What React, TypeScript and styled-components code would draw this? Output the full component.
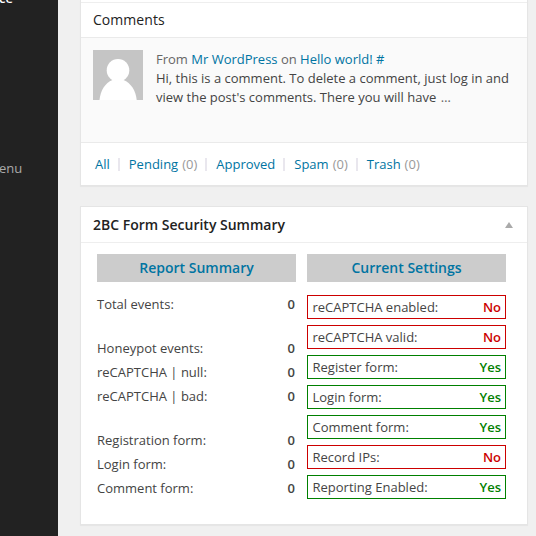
import React from "react";
import styled, { createGlobalStyle } from "styled-components";

const GlobalStyle = createGlobalStyle`
  * { box-sizing: border-box; }
  body {
    margin: 0;
    background: #f0f0f0;
    color: #444;
    font: 13px/19px "Open Sans", sans-serif;
  }
`;

const Page = styled.div`
  display: flex;
  width: 536px;
  height: 536px;
  overflow: hidden;
`;

const Sidebar = styled.nav`
  flex: none;
  width: 58px;
  background: #222;
  overflow: hidden;
`;

const SidebarItem = styled.div<{ $active?: boolean; $gap: number }>`
  height: 20px;
  line-height: 20px;
  margin: ${(p) => p.$gap}px 0 0 -1px;
  color: ${(p) => (p.$active ? "#fff" : "#aaa")};
  font-weight: ${(p) => (p.$active ? 600 : 400)};
  white-space: nowrap;
`;

const Main = styled.main`
  flex: none;
  width: 448px;
  margin-left: 22px;
  display: flex;
  flex-direction: column;
  gap: 20px;
`;

const Panel = styled.section<{ $height: number; $cut?: boolean }>`
  height: ${(p) => p.$height}px;
  background: #fff;
  border: 1px solid #e5e5e5;
  border-top-width: ${(p) => (p.$cut ? 0 : 1)}px;
  box-shadow: 0 1px 1px rgba(0, 0, 0, 0.04);
`;

const SectionTitle = styled.h4`
  height: 36px;
  margin: 2px 0 0;
  padding: 0 12px;
  border-top: 1px solid #eee;
  border-bottom: 1px solid #eaeaea;
  font-size: 14px;
  font-weight: 400;
  line-height: 34px;
  letter-spacing: 0.05px;
  color: #222;
`;

const Comment = styled.article`
  display: flex;
  gap: 13px;
  height: 105px;
  padding: 12px;
  background: #fafafa;
  border-bottom: 1px solid #eaeaea;
`;

const Avatar = styled.svg`
  flex: none;
  width: 50px;
  height: 50px;
`;

const CommentText = styled.div`
  white-space: nowrap;
  color: #444;
`;

const Meta = styled.div`
  color: #666;
`;

const Link = styled.a`
  color: #0074a2;
`;

const Ellipsis = styled.span`
  margin-left: 1px;
  color: #666;
`;

const Filters = styled.div`
  display: flex;
  height: 42px;
  padding-left: 14px;
  line-height: 42px;
`;

const Count = styled.span`
  margin-left: 4px;
`;

const Filter = styled.span`
  display: flex;
  color: #999;
  white-space: nowrap;

  & + &::before {
    content: "";
    width: 2px;
    height: 13px;
    margin: 15px 9px 0 8px;
    background: #e9e7ee;
  }
`;

const PanelHeader = styled.header`
  display: flex;
  align-items: center;
  justify-content: space-between;
  height: 36px;
  padding: 0 14px 0 12px;
  border-bottom: 1px solid #eee;
`;

const PanelTitle = styled.h3`
  margin: 0;
  font-size: 14px;
  font-weight: 600;
  line-height: 20px;
  color: #222;
`;

const Arrow = styled.svg`
  width: 8px;
  height: 6px;
  fill: #aaa;
`;

const Columns = styled.div`
  display: grid;
  grid-template-columns: 199px 199px;
  gap: 11px;
  padding: 11px 16px;
`;

const ColumnTitle = styled.h4`
  margin: 0;
  height: 28px;
  background: #ccc;
  color: #0074a2;
  font-size: 14px;
  font-weight: 600;
  line-height: 28px;
  text-align: center;
`;

const ReportList = styled.div`
  display: flex;
  flex-direction: column;
  gap: 20px;
  padding: 10px 1px 0 0;
`;

const ReportRow = styled.div`
  display: flex;
  justify-content: space-between;
  height: 24px;
  line-height: 24px;
`;

const Value = styled.strong`
  font-weight: 600;
`;

const SettingsList = styled.div`
  display: grid;
  gap: 6px;
  padding-top: 13px;
`;

const Setting = styled.div<{ $on: boolean }>`
  display: flex;
  justify-content: space-between;
  height: 24px;
  padding: 0 4px 0 4.5px;
  border: 1px solid ${(p) => (p.$on ? "green" : "#c00")};
  line-height: 23px;

  ${Value} {
    color: ${(p) => (p.$on ? "green" : "#c00")};
  }
`;

const filters: [string, boolean][] = [
  ["All", false],
  ["Pending", true],
  ["Approved", false],
  ["Spam", true],
  ["Trash", true],
];

const reports = [
  ["Total events:"],
  ["Honeypot events:", "reCAPTCHA | null:", "reCAPTCHA | bad:"],
  ["Registration form:", "Login form:", "Comment form:"],
];

const settings: [string, boolean][] = [
  ["reCAPTCHA enabled:", false],
  ["reCAPTCHA valid:", false],
  ["Register form:", true],
  ["Login form:", true],
  ["Comment form:", true],
  ["Record IPs:", false],
  ["Reporting Enabled:", true],
];

export default function App() {
  return (
    <>
      <GlobalStyle />
      <Page>
        <Sidebar>
          <SidebarItem $active $gap={-12}>ce</SidebarItem>
          <SidebarItem $gap={150}>enu</SidebarItem>
        </Sidebar>
        <Main>
          <Panel $height={186} $cut>
            <SectionTitle>Comments</SectionTitle>
            <Comment>
              <Avatar viewBox="0 0 50 50">
                <rect width="50" height="50" fill="#c5c5c5" />
                <circle cx="25" cy="20.300" r="11.300" fill="#fff" />
                <path d="M6.500 50C7.500 40.500 12 33 19.500 30H30.500C38 33 42.700 40.500 43.700 50Z" fill="#fff" />
              </Avatar>
              <CommentText>
                <Meta>
                  From <Link>Mr WordPress</Link> on <Link>Hello world!</Link> <Link>#</Link>
                </Meta>
                Hi, this is a comment. To delete a comment, just log in and
                <br />
                view the post's comments. There you will have <Ellipsis>…</Ellipsis>
              </CommentText>
            </Comment>
            <Filters>
              {filters.map(([name, counted]) => (
                <Filter key={name}>
                  <Link>{name}</Link>
                  {counted && <Count>(0)</Count>}
                </Filter>
              ))}
            </Filters>
          </Panel>
          <Panel $height={319}>
            <PanelHeader>
              <PanelTitle>2BC Form Security Summary</PanelTitle>
              <Arrow viewBox="0 0 8 6">
                <path d="M4 0L8 6H0Z" />
              </Arrow>
            </PanelHeader>
            <Columns>
              <div>
                <ColumnTitle>Report Summary</ColumnTitle>
                <ReportList>
                  {reports.map((group) => (
                    <div key={group[0]}>
                      {group.map((label) => (
                        <ReportRow key={label}>
                          <span>{label}</span>
                          <Value>0</Value>
                        </ReportRow>
                      ))}
                    </div>
                  ))}
                </ReportList>
              </div>
              <div>
                <ColumnTitle>Current Settings</ColumnTitle>
                <SettingsList>
                  {settings.map(([label, on]) => (
                    <Setting key={label} $on={on}>
                      <span>{label}</span>
                      <Value>{on ? "Yes" : "No"}</Value>
                    </Setting>
                  ))}
                </SettingsList>
              </div>
            </Columns>
          </Panel>
        </Main>
      </Page>
    </>
  );
}
